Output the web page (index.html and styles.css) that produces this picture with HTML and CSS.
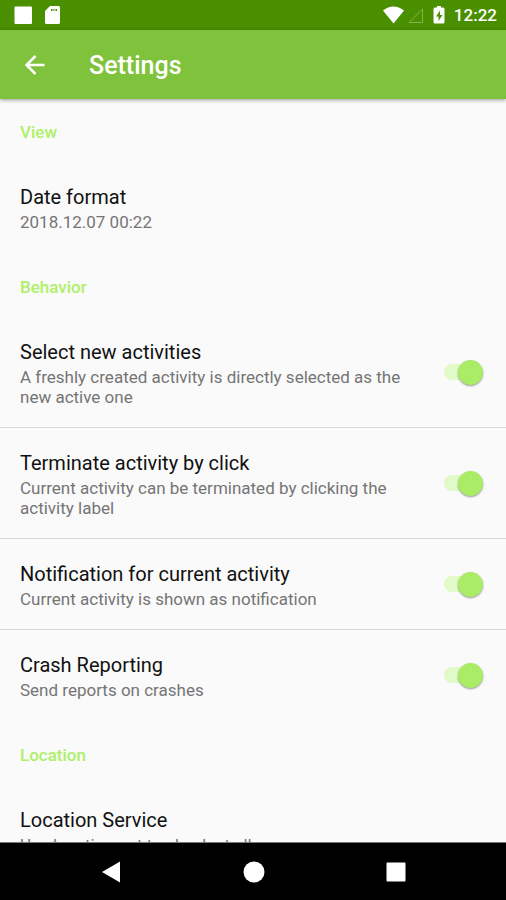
FILE: index.html
```html
<!DOCTYPE html>
<html lang="en">
<head>
<meta charset="utf-8">
<meta name="viewport" content="width=device-width, initial-scale=1">
<title>Settings</title>
<link rel="stylesheet" href="styles.css">
</head>
<body>
<div class="status-bar">
  <svg class="status-left" width="48" height="20" viewBox="0 0 48 20" aria-hidden="true">
    <rect x="0.500" y="1.500" width="17.500" height="17.500" rx="1"/>
    <path fill-rule="evenodd" d="M36 1h8.500q1.500 0 1.500 1.500v15q0 1.500-1.500 1.500h-12q-1.500 0-1.500-1.500V6zM37 4v2h1.500v-2zM39.500 4v2h1v-2zM41.500 4v2h1.500v-2z"/>
  </svg>
  <div class="status-right">
    <svg width="64" height="20" viewBox="0 0 64 20" aria-hidden="true">
      <path d="M0 5.500Q10.500-2.500 21 5.500L10.500 18.500z"/>
      <path class="signal" d="M39.500 4v13.500H26z"/>
      <path fill-rule="evenodd" d="M54 2.500V1h4v1.500h2q1.500 0 1.500 1.500v13q0 1.500-1.500 1.500h-8q-1.500 0-1.500-1.500V4q0-1.500 1.500-1.500zM57 5.500l-4 6h2.500V16l4-6H57z"/>
    </svg>
    <span class="clock">12:22</span>
  </div>
</div>
<header class="app-bar">
  <button class="back" type="button" aria-label="Back">
    <svg width="20" height="20" viewBox="0 0 20 20" aria-hidden="true"><path d="M19.500 10H2M10.500 1L1.500 10l9 9"/></svg>
  </button>
  <h1>Settings</h1>
</header>
<main class="list">
  <section>
    <h2>View</h2>
    <div class="row">
      <div class="text"><span class="title">Date format</span><span class="summary">2018.12.07 00:22</span></div>
    </div>
  </section>
  <section>
    <h2>Behavior</h2>
    <label class="row">
      <span class="text"><span class="title">Select new activities</span><span class="summary">A freshly created activity is directly selected as the new active one</span></span>
      <input class="switch" type="checkbox" role="switch" checked>
    </label>
    <label class="row">
      <span class="text"><span class="title">Terminate activity by click</span><span class="summary">Current activity can be terminated by clicking the activity label</span></span>
      <input class="switch" type="checkbox" role="switch" checked>
    </label>
    <label class="row">
      <span class="text"><span class="title">Notification for current activity</span><span class="summary">Current activity is shown as notification</span></span>
      <input class="switch" type="checkbox" role="switch" checked>
    </label>
    <label class="row">
      <span class="text"><span class="title">Crash Reporting</span><span class="summary">Send reports on crashes</span></span>
      <input class="switch" type="checkbox" role="switch" checked>
    </label>
  </section>
  <section>
    <h2>Location</h2>
    <div class="row">
      <div class="text"><span class="title">Location Service</span><span class="summary">Use location not to check at all</span></div>
    </div>
  </section>
</main>
<nav class="nav-bar">
  <button type="button" aria-label="Back"><svg width="22" height="22" viewBox="0 0 22 22"><path d="M1 11L19 .5v21z"/></svg></button>
  <button type="button" aria-label="Home"><svg width="22" height="22" viewBox="0 0 22 22"><circle cx="11" cy="11" r="10.500"/></svg></button>
  <button type="button" aria-label="Overview"><svg width="22" height="22" viewBox="0 0 22 22"><rect x="1.500" y="1.500" width="19" height="19" rx="1"/></svg></button>
</nav>
</body>
</html>
```
FILE: styles.css
```css
* {
  box-sizing: border-box;
}

body {
  display: flex;
  flex-direction: column;
  height: 100vh;
  margin: 0;
  background: #fafafa;
  color: #111;
  font-family: Roboto, "Liberation Sans", sans-serif;
}

button {
  display: grid;
  place-items: center;
  padding: 0;
  border: 0;
  background: none;
}

svg {
  display: block;
  fill: #fff;
}

.status-bar {
  display: flex;
  flex: none;
  align-items: center;
  justify-content: space-between;
  height: 30px;
  padding: 0 9px 0 14px;
  background: #4a8f00;
}

.status-right {
  display: flex;
  align-items: center;
  gap: 7px;
}

.signal {
  fill: none;
  stroke: #86b454;
}

.clock {
  color: #fff;
  font-size: 17px;
  font-weight: 500;
  line-height: 32px;
}

.app-bar {
  position: relative;
  display: flex;
  flex: none;
  align-items: center;
  gap: 34px;
  height: 69px;
  padding: 0 15px;
  background: #7fc23b;
  box-shadow: 0 1px 4px rgba(0, 0, 0, 0.4);
}

.back {
  width: 40px;
  height: 40px;
}

.back path {
  fill: none;
  stroke: #fff;
  stroke-width: 2.500;
}

h1 {
  margin: 0;
  padding-top: 2px;
  color: #fff;
  font-size: 25px;
  font-weight: 500;
  line-height: 32px;
}

.list {
  flex: 1;
  min-height: 0;
  overflow: hidden;
}

h2 {
  margin: 0;
  padding: 25px 20px 20px;
  color: #aef068;
  font-size: 17px;
  font-weight: 500;
  line-height: 20px;
}

section:first-child h2 {
  padding-top: 23px;
}

.row {
  display: flex;
  align-items: center;
  gap: 24px;
  padding: 20px;
}

.row + .row {
  border-top: 1px solid #d9d9d9;
}

.text {
  flex: 1;
}

.title,
.summary {
  display: block;
}

.title {
  font-size: 20px;
  line-height: 30px;
}

.summary {
  color: #757575;
  font-size: 17px;
  line-height: 20px;
}

.switch {
  position: relative;
  flex: none;
  width: 42px;
  height: 28px;
  margin: 0;
  appearance: none;
}

.switch::before {
  position: absolute;
  top: 6px;
  left: 0;
  width: 36px;
  height: 16px;
  border-radius: 8px;
  background: #e1fac8;
  content: "";
}

.switch::after {
  position: absolute;
  top: 2px;
  left: 0;
  width: 25px;
  height: 25px;
  border-radius: 50%;
  background: #fafafa;
  box-shadow: 0 1px 2px rgba(0, 0, 0, 0.4);
  content: "";
}

.switch:checked::after {
  left: 14px;
  background: #aaec66;
}

.nav-bar {
  display: flex;
  flex: none;
  align-items: center;
  justify-content: center;
  gap: 102px;
  height: 58px;
  padding-left: 2px;
  border-top: 1px solid #777;
  background: #000;
}

.nav-bar button {
  width: 40px;
  height: 40px;
}
```
